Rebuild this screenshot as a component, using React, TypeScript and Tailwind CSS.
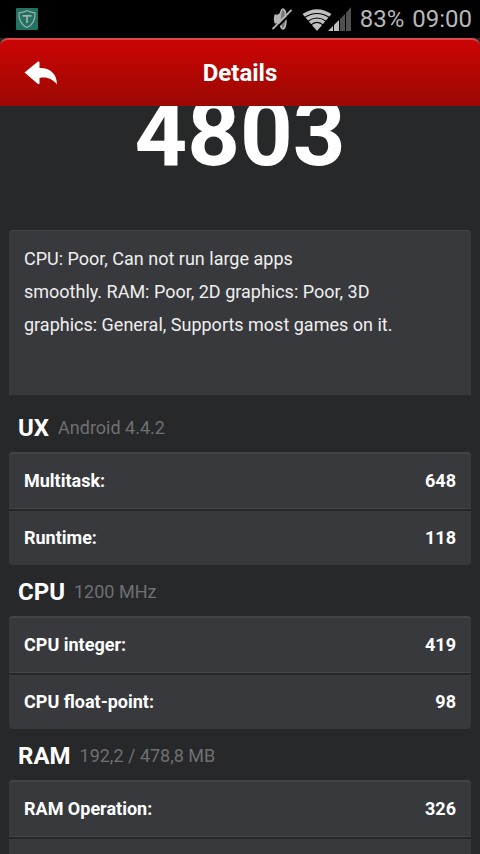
interface Result {
  label: string;
  value: string;
}

interface Section {
  title: string;
  info: string;
  results: Result[];
}

const SCORE = '4803';

const SECTIONS: Section[] = [
  {
    title: 'UX',
    info: 'Android 4.4.2',
    results: [
      { label: 'Multitask:', value: '648' },
      { label: 'Runtime:', value: '118' },
    ],
  },
  {
    title: 'CPU',
    info: '1200 MHz',
    results: [
      { label: 'CPU integer:', value: '419' },
      { label: 'CPU float-point:', value: '98' },
    ],
  },
  {
    title: 'RAM',
    info: '192,2 / 478,8 MB',
    results: [
      { label: 'RAM Operation:', value: '326' },
      { label: '', value: '' },
    ],
  },
];

function ShieldIcon() {
  return (
    <svg width="22" height="22" viewBox="0 0 22 22" fill="none">
      <rect width="22" height="22" rx="1" fill="#1f7362" />
      <path
        d="M11 2.5C8.8 4 5.8 4.7 3 4.8C2.6 10.5 4.5 16.5 11 19.5C17.5 16.5 19.4 10.5 19 4.8C16.2 4.7 13.2 4 11 2.5Z"
        stroke="#a3aaa7"
        strokeWidth="1.2"
      />
      <path d="M6.5 7.8H15.5M11 7.8V15" stroke="#a9b0ad" strokeWidth="1.7" />
    </svg>
  );
}

function MutedIcon() {
  return (
    <svg width="20" height="24" viewBox="0 0 20 24">
      <path d="M2.5 7.5H6Q8.5 6 9.5 3V21Q8.5 18 6 16.5H2.5Q1 12 2.5 7.5Z" fill="#b4b4b4" />
      <ellipse cx="11" cy="12" rx="3" ry="10" fill="#777" stroke="#b4b4b4" strokeWidth="1.6" />
      <path d="M1 24.5L20 5.5" stroke="#000" strokeWidth="2" />
      <path d="M.5 22L19.500 3" stroke="#b4b4b4" strokeWidth="1.8" />
    </svg>
  );
}

function WifiIcon() {
  return (
    <svg width="30" height="22" viewBox="0 0 30 22">
      <path d="M15 22L.5 5Q15-4.5 29.5 5Z" fill="#c0c0c0" />
      <g fill="none" stroke="#000" strokeWidth="1.1">
        <path d="M2.5 8.5Q15 .5 27.5 8.5" />
        <path d="M5.5 12.5Q15 5.5 24.5 12.5" />
        <path d="M8.5 16.3Q15 10.5 21.5 16.3" />
      </g>
    </svg>
  );
}

function SignalIcon() {
  return (
    <svg width="24" height="24" viewBox="0 0 24 24">
      <path d="M0 24L5 19V24Z" fill="#c0c0c0" />
      <path d="M6 18L11 13V24H6Z" fill="#c0c0c0" />
      <path d="M12 12L17 7V24H12Z" fill="#505052" />
      <path d="M18 6L23 0V24H18Z" fill="#505052" />
    </svg>
  );
}

function BackIcon() {
  return (
    <svg width="34" height="24" viewBox="0 0 34 24" fill="#fff">
      <path d="M.5 11.5L14 .5Q15.5 0 15.5 1.5V7C25 6.500 33 12 33 23.500C28.500 17.500 22 15.500 15.500 17V22Q15.500 24 14 23Z" />
    </svg>
  );
}

function StatusBar() {
  return (
    <div className="flex h-[38px] shrink-0 items-center justify-between bg-black pl-4 pr-2">
      <ShieldIcon />
      <div className="flex items-center text-2xl text-[#b8b8b8]">
        <MutedIcon />
        <div className="ml-2.5 flex items-end">
          <WifiIcon />
          <div className="-ml-1">
            <SignalIcon />
          </div>
        </div>
        <span className="ml-2">83%</span>
        <span className="ml-2">09:00</span>
      </div>
    </div>
  );
}

function ResultSection({ title, info, results }: Section) {
  return (
    <section>
      <div className="flex h-[51px] items-center gap-[9px] px-[9px] pt-0.5">
        <h2 className="text-2xl font-bold text-white">{title}</h2>
        <span className="text-lg text-[#6f7072]">{info}</span>
      </div>
      <dl className="overflow-hidden rounded-sm border-t-2 border-[#434448] bg-[#38393c]">
        {results.map((r, i) => (
          <div
            key={i}
            className="flex h-14 items-center justify-between border-t-[#27282a] border-b-[#434448] px-[15px] text-lg font-bold text-white first:h-[55px] first:border-b not-first:border-t-2"
          >
            <dt>{r.label}</dt>
            <dd>{r.value}</dd>
          </div>
        ))}
      </dl>
    </section>
  );
}

export default function App() {
  return (
    <div className="flex h-screen flex-col overflow-hidden bg-[#27282a] font-['Roboto',sans-serif]">
      <StatusBar />
      <header className="grid h-[68px] shrink-0 grid-cols-[1fr_auto_1fr] items-center rounded-t-lg border-t-2 border-[#d9484b] bg-linear-to-b from-[#cb0404] to-[#9b0803] px-6">
        <button type="button" aria-label="Back" className="justify-self-start">
          <BackIcon />
        </button>
        <h1 className="text-2xl font-bold text-white">Details</h1>
      </header>

      {/* Scrolled content, the score is partly under the header */}
      <main className="flex-1 overflow-hidden px-[9px]">
        <p className="text-center text-[92px] font-bold leading-[56px] text-white">{SCORE}</p>
        <p className="mb-1.5 mt-[68px] h-[165px] rounded-t-sm border-t border-[#454649] bg-[#38393c] px-[15px] pt-[11px] text-lg leading-[33px] text-[#efefef]">
          CPU: Poor, Can not run large apps
          <br />
          smoothly. RAM: Poor, 2D graphics: Poor, 3D
          <br />
          graphics: General, Supports most games on it.
        </p>
        {SECTIONS.map((s) => (
          <ResultSection key={s.title} {...s} />
        ))}
      </main>
    </div>
  );
}
